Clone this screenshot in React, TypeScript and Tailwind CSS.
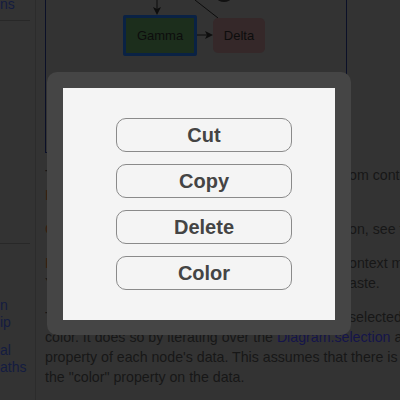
import React from "react";

const Line = ({ pre, post }: { pre: React.ReactNode; post?: React.ReactNode }) => (
  <div className="flex h-5 whitespace-nowrap leading-5">
    <span className="w-[304px] shrink-0 overflow-hidden">{pre}</span>
    {post && <span>{post}</span>}
  </div>
);

const Code = ({ children }: { children: React.ReactNode }) => (
  <span className="text-[#3a1d0f]">{children}</span>
);

export default function App() {
  const items = ["Cut", "Copy", "Delete", "Color"];
  return (
    <div className="relative h-[400px] w-[400px] overflow-hidden bg-[#333333] font-['Liberation_Sans',Arial,sans-serif]">
      <div className="flex h-full">
        <aside className="flex w-[36px] shrink-0 flex-col overflow-hidden border-r border-[#2c2c2c] text-[14px] text-[#141c40]">
          <div className="-mt-[6px] leading-5">ns</div>
          <div className="mt-[6px] h-px w-[30px] bg-[#282828]" />
          <div className="mt-[222px] h-px w-[30px] bg-[#282828]" />
          <div className="mt-[53px] leading-[17px]">
            <div>n</div>
            <div>ip</div>
          </div>
          <div className="mt-[11px] leading-[17px]">
            <div>al</div>
            <div>aths</div>
          </div>
        </aside>
        <main className="flex-1 pl-[9px] text-[14.2px] text-[#171717]">
          <div className="relative h-[153px] w-[302px] border-x border-b border-[#0b1028]">
            <svg className="absolute inset-0" width="300" height="152" viewBox="0 0 300 152">
              <ellipse cx="178" cy="-2" rx="7" ry="4" fill="#111" />
              <line x1="149" y1="0" x2="172" y2="18" stroke="#0d0d0d" strokeWidth="1" />
              <line x1="111" y1="0" x2="111" y2="12" stroke="#0d0d0d" strokeWidth="1" />
              <polygon points="111,15 107,7 111,9 115,7" fill="#0d0d0d" />
              <line x1="151" y1="35" x2="162" y2="35" stroke="#0d0d0d" strokeWidth="1" />
              <polygon points="167,35 159,31 161,35 159,39" fill="#0d0d0d" />
            </svg>
            <div className="absolute left-[77px] top-[15px] flex h-[41px] w-[74px] items-center justify-center rounded-[2px] border-[3px] border-[#0a2244] bg-[#1c2e1c] text-[13px] text-[#0d0d0d]">
              Gamma
            </div>
            <div className="absolute left-[167px] top-[18px] flex h-[35px] w-[52px] items-center justify-center rounded-[5px] bg-[#352829] text-[13px] text-[#0d0d0d]">
              Delta
            </div>
          </div>
          <div className="mt-[12px]">
            <Line
              pre="This demonstrates the implementation of a custom context menu fr"
              post="om context menus."
            />
            <Line pre={<><Code>HTMLInfo</Code> is used to show and hide it.</>} />
          </div>
          <div className="mt-[14px]">
            <Line
              pre={<><Code>ContextMenuTool</Code> For a lightbox style context menu implementati</>}
              post="on, see the LightBox sample."
            />
          </div>
          <div className="mt-[14px]">
            <Line
              pre={<><Code>Right</Code>-click or tap-hold on a Node to bring up a c</>}
              post="ontext menu."
            />
            <Line pre="You can bring up the context menu anywhere to p" post="aste." />
          </div>
          <div className="mt-[14px]">
            <Line pre='The "Color" option changes the color of the ' post="selected nodes'" />
            <div className="h-5 whitespace-nowrap leading-5">
              color. It does so by iterating over the{" "}
              <span className="text-[#15154a]">Diagram.selection</span> and setting the
            </div>
            <div className="h-5 whitespace-nowrap leading-5">
              property of each node's data. This assumes that there is a binding on
            </div>
            <div className="h-5 whitespace-nowrap leading-5">the "color" property on the data.</div>
          </div>
        </main>
      </div>

      <div className="absolute left-[47px] top-[72px] h-[263px] w-[304px] rounded-[10px] bg-[#454545] px-4 pb-[15px] pt-4">
        <div className="flex h-full flex-col gap-3 bg-[#f4f4f4] pl-[53px] pr-[43px] pt-[30px]">
          {items.map((t) => (
            <button
              key={t}
              className="flex h-[34px] w-full items-center justify-center rounded-[10px] border border-[#8a8a8a] bg-[#f4f4f4] text-[20px] font-bold text-[#444444]"
            >
              {t}
            </button>
          ))}
        </div>
      </div>
    </div>
  );
}
